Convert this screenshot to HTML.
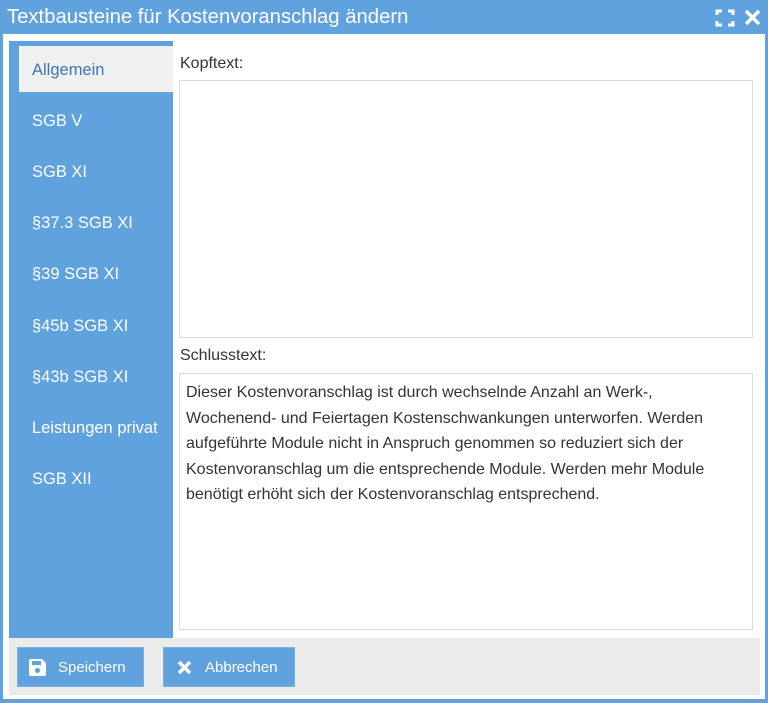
<!DOCTYPE html>
<html><head><style>
*{box-sizing:border-box;margin:0;padding:0}
body{width:768px;height:703px;background:#5fa2dd;font-family:"Liberation Sans",sans-serif;position:relative;overflow:hidden}
.title{position:absolute;left:7px;top:6px;color:#fff;font-size:20.3px}
.body{position:absolute;left:3px;top:34px;width:762px;height:665px;background:#fff}
.side{position:absolute;left:9px;top:41px;width:164px;height:597px;background:#5fa2dd}
.item{position:absolute;left:23px;color:#fff;font-size:16.5px}
.act{position:absolute;left:19px;top:46px;width:154px;height:46px;background:#f0f0f0}
.lbl{position:absolute;left:180px;font-size:16px;color:#333}
.ta{position:absolute;left:179px;width:574px;border:1px solid #ddd;background:#fff}
.txt{padding:6px 6px;font-size:16px;line-height:25.5px;color:#333;white-space:nowrap}
.foot{position:absolute;left:9px;top:638px;width:751px;height:57px;background:#ebebeb}
.btn{position:absolute;top:647px;height:40px;background:#5fa2dd;color:#fff;font-size:15px;display:flex;align-items:center;border:1px solid #7ab0e0}
</style></head><body>
<div class="title">Textbausteine für Kostenvoranschlag ändern</div>
<svg style="position:absolute;left:715px;top:9px" width="20" height="18" viewBox="0 0 20 18" fill="none" stroke="#fff" stroke-width="3"><path d="M2 6V2h5M13 2h5v4M18 12v4h-5M7 16H2v-4"/></svg>
<svg style="position:absolute;left:744px;top:9px" width="17" height="17" viewBox="0 0 17 17" stroke="#fff" stroke-width="3.5"><path d="M2 2L15 15M15 2L2 15"/></svg>
<div class="body"></div>
<div class="side"></div>
<div class="act"></div>
<div class="item" style="top:61px;left:32px;color:#3a78b5">Allgemein</div>
<div class="item" style="top:112px;left:32px">SGB V</div>
<div class="item" style="top:163px;left:32px">SGB XI</div>
<div class="item" style="top:214px;left:32px">§37.3 SGB XI</div>
<div class="item" style="top:265px;left:32px">§39 SGB XI</div>
<div class="item" style="top:317px;left:32px">§45b SGB XI</div>
<div class="item" style="top:368px;left:32px">§43b SGB XI</div>
<div class="item" style="top:419px;left:32px">Leistungen privat</div>
<div class="item" style="top:470px;left:32px">SGB XII</div>
<div class="lbl" style="top:55px">Kopftext:</div>
<div class="ta" style="top:80px;height:258px"></div>
<div class="lbl" style="top:347px">Schlusstext:</div>
<div class="ta" style="top:373px;height:257px"><div class="txt">Dieser Kostenvoranschlag ist durch wechselnde Anzahl an Werk-,<br>Wochenend- und Feiertagen Kostenschwankungen unterworfen. Werden<br>aufgeführte Module nicht in Anspruch genommen so reduziert sich der<br>Kostenvoranschlag um die entsprechende Module. Werden mehr Module<br>benötigt erhöht sich der Kostenvoranschlag entsprechend.</div></div>
<div class="foot"></div>
<div class="btn" style="left:17px;width:127px">
<svg style="margin-left:10px" width="19" height="19" viewBox="0 0 19 19"><path d="M1 3a2 2 0 0 1 2-2h11l4 4v11a2 2 0 0 1-2 2H3a2 2 0 0 1-2-2z" fill="#fff"/><rect x="4" y="3" width="9" height="4" fill="#5fa2dd"/><circle cx="9.5" cy="12.5" r="2.5" fill="#5fa2dd"/></svg>
<span style="margin-left:11px">Speichern</span></div>
<div class="btn" style="left:163px;width:132px">
<svg style="margin-left:13px" width="15" height="15" viewBox="0 0 15 15" stroke="#fff" stroke-width="3.5"><path d="M2 2L13 13M13 2L2 13"/></svg>
<span style="margin-left:13px">Abbrechen</span></div>
</body></html>
